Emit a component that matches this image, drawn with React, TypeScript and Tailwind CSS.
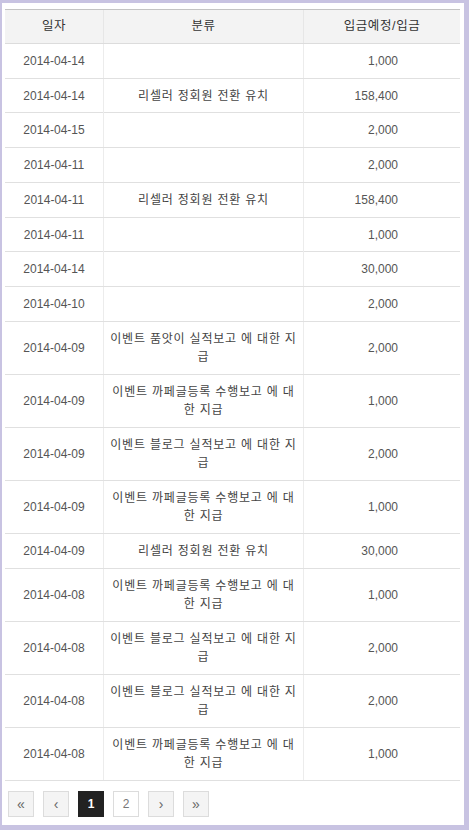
import React from "react";

type Row = { date: string; cat: string[]; amount: string };

const rows: Row[] = [
  { date: "2014-04-14", cat: [], amount: "1,000" },
  { date: "2014-04-14", cat: ["리셀러 정회원 전환 유치"], amount: "158,400" },
  { date: "2014-04-15", cat: [], amount: "2,000" },
  { date: "2014-04-11", cat: [], amount: "2,000" },
  { date: "2014-04-11", cat: ["리셀러 정회원 전환 유치"], amount: "158,400" },
  { date: "2014-04-11", cat: [], amount: "1,000" },
  { date: "2014-04-14", cat: [], amount: "30,000" },
  { date: "2014-04-10", cat: [], amount: "2,000" },
  { date: "2014-04-09", cat: ["이벤트 품앗이 실적보고 에 대한 지", "급"], amount: "2,000" },
  { date: "2014-04-09", cat: ["이벤트 까페글등록 수행보고 에 대", "한 지급"], amount: "1,000" },
  { date: "2014-04-09", cat: ["이벤트 블로그 실적보고 에 대한 지", "급"], amount: "2,000" },
  { date: "2014-04-09", cat: ["이벤트 까페글등록 수행보고 에 대", "한 지급"], amount: "1,000" },
  { date: "2014-04-09", cat: ["리셀러 정회원 전환 유치"], amount: "30,000" },
  { date: "2014-04-08", cat: ["이벤트 까페글등록 수행보고 에 대", "한 지급"], amount: "1,000" },
  { date: "2014-04-08", cat: ["이벤트 블로그 실적보고 에 대한 지", "급"], amount: "2,000" },
  { date: "2014-04-08", cat: ["이벤트 블로그 실적보고 에 대한 지", "급"], amount: "2,000" },
  { date: "2014-04-08", cat: ["이벤트 까페글등록 수행보고 에 대", "한 지급"], amount: "1,000" },
];

const pages = [
  { label: "«", active: false, plain: false },
  { label: "‹", active: false, plain: false },
  { label: "1", active: true, plain: false },
  { label: "2", active: false, plain: true },
  { label: "›", active: false, plain: false },
  { label: "»", active: false, plain: false },
];

export default function App() {
  return (
    <div
      className="w-[469px] h-[835px] bg-white text-[12px]"
      style={{ fontFamily: '"Liberation Sans", "Noto Sans CJK KR", sans-serif' }}
    >
      <div className="h-[830px] border-l-2 border-t-[3px] border-r-[5px] border-b-[5px] border-[#c8c3e2] pt-[6px] pl-[3px] pr-[4px]">
        <div className="w-[455px] border-t border-[#c4c4c4]">
          {/* header */}
          <div className="grid grid-cols-[99px_200px_156px] h-[34px] bg-[#f3f3f3] border-b border-[#dcdcdc] text-[#333] text-[12.5px] tracking-[0.6px]">
            <div className="flex items-center justify-center border-r border-[#e6e6e6]">일자</div>
            <div className="flex items-center justify-center border-r border-[#e6e6e6]">분류</div>
            <div className="flex items-center justify-center">입금예정/입금</div>
          </div>
          {rows.map((r, i) => (
            <div
              key={i}
              className={`grid grid-cols-[99px_200px_156px] border-b border-[#e0e0e0] text-[#555] leading-[18px] ${
                i % 4 === 1 && i < 8 ? "h-[34px]" : ""
              }`}
            >
              <div className="flex items-center justify-center py-2 border-r border-[#ececec]">{r.date}</div>
              <div className="flex flex-col items-center justify-center py-2 border-r border-[#ececec] text-[#444] tracking-[0.8px] min-h-[34px]">
                {r.cat.map((line, j) => (
                  <span key={j} className="whitespace-nowrap">{line}</span>
                ))}
              </div>
              <div className="flex items-center justify-end py-2 pr-[62px]">{r.amount}</div>
            </div>
          ))}
        </div>
        {/* pagination */}
        <div className="flex gap-[9px] pt-[10px] pl-[3px]">
          {pages.map((p, i) => (
            <div
              key={i}
              className={
                p.active
                  ? "w-[26px] h-[26px] flex items-center justify-center bg-[#222] text-white border border-[#222] font-bold"
                  : p.plain
                  ? "w-[26px] h-[26px] flex items-center justify-center bg-white text-[#777] border border-[#dcdcdc]"
                  : "w-[26px] h-[26px] flex items-center justify-center bg-[#f4f4f4] text-[#666] border border-[#dcdcdc] text-[14px]"
              }
            >
              {p.label}
            </div>
          ))}
        </div>
      </div>
    </div>
  );
}
